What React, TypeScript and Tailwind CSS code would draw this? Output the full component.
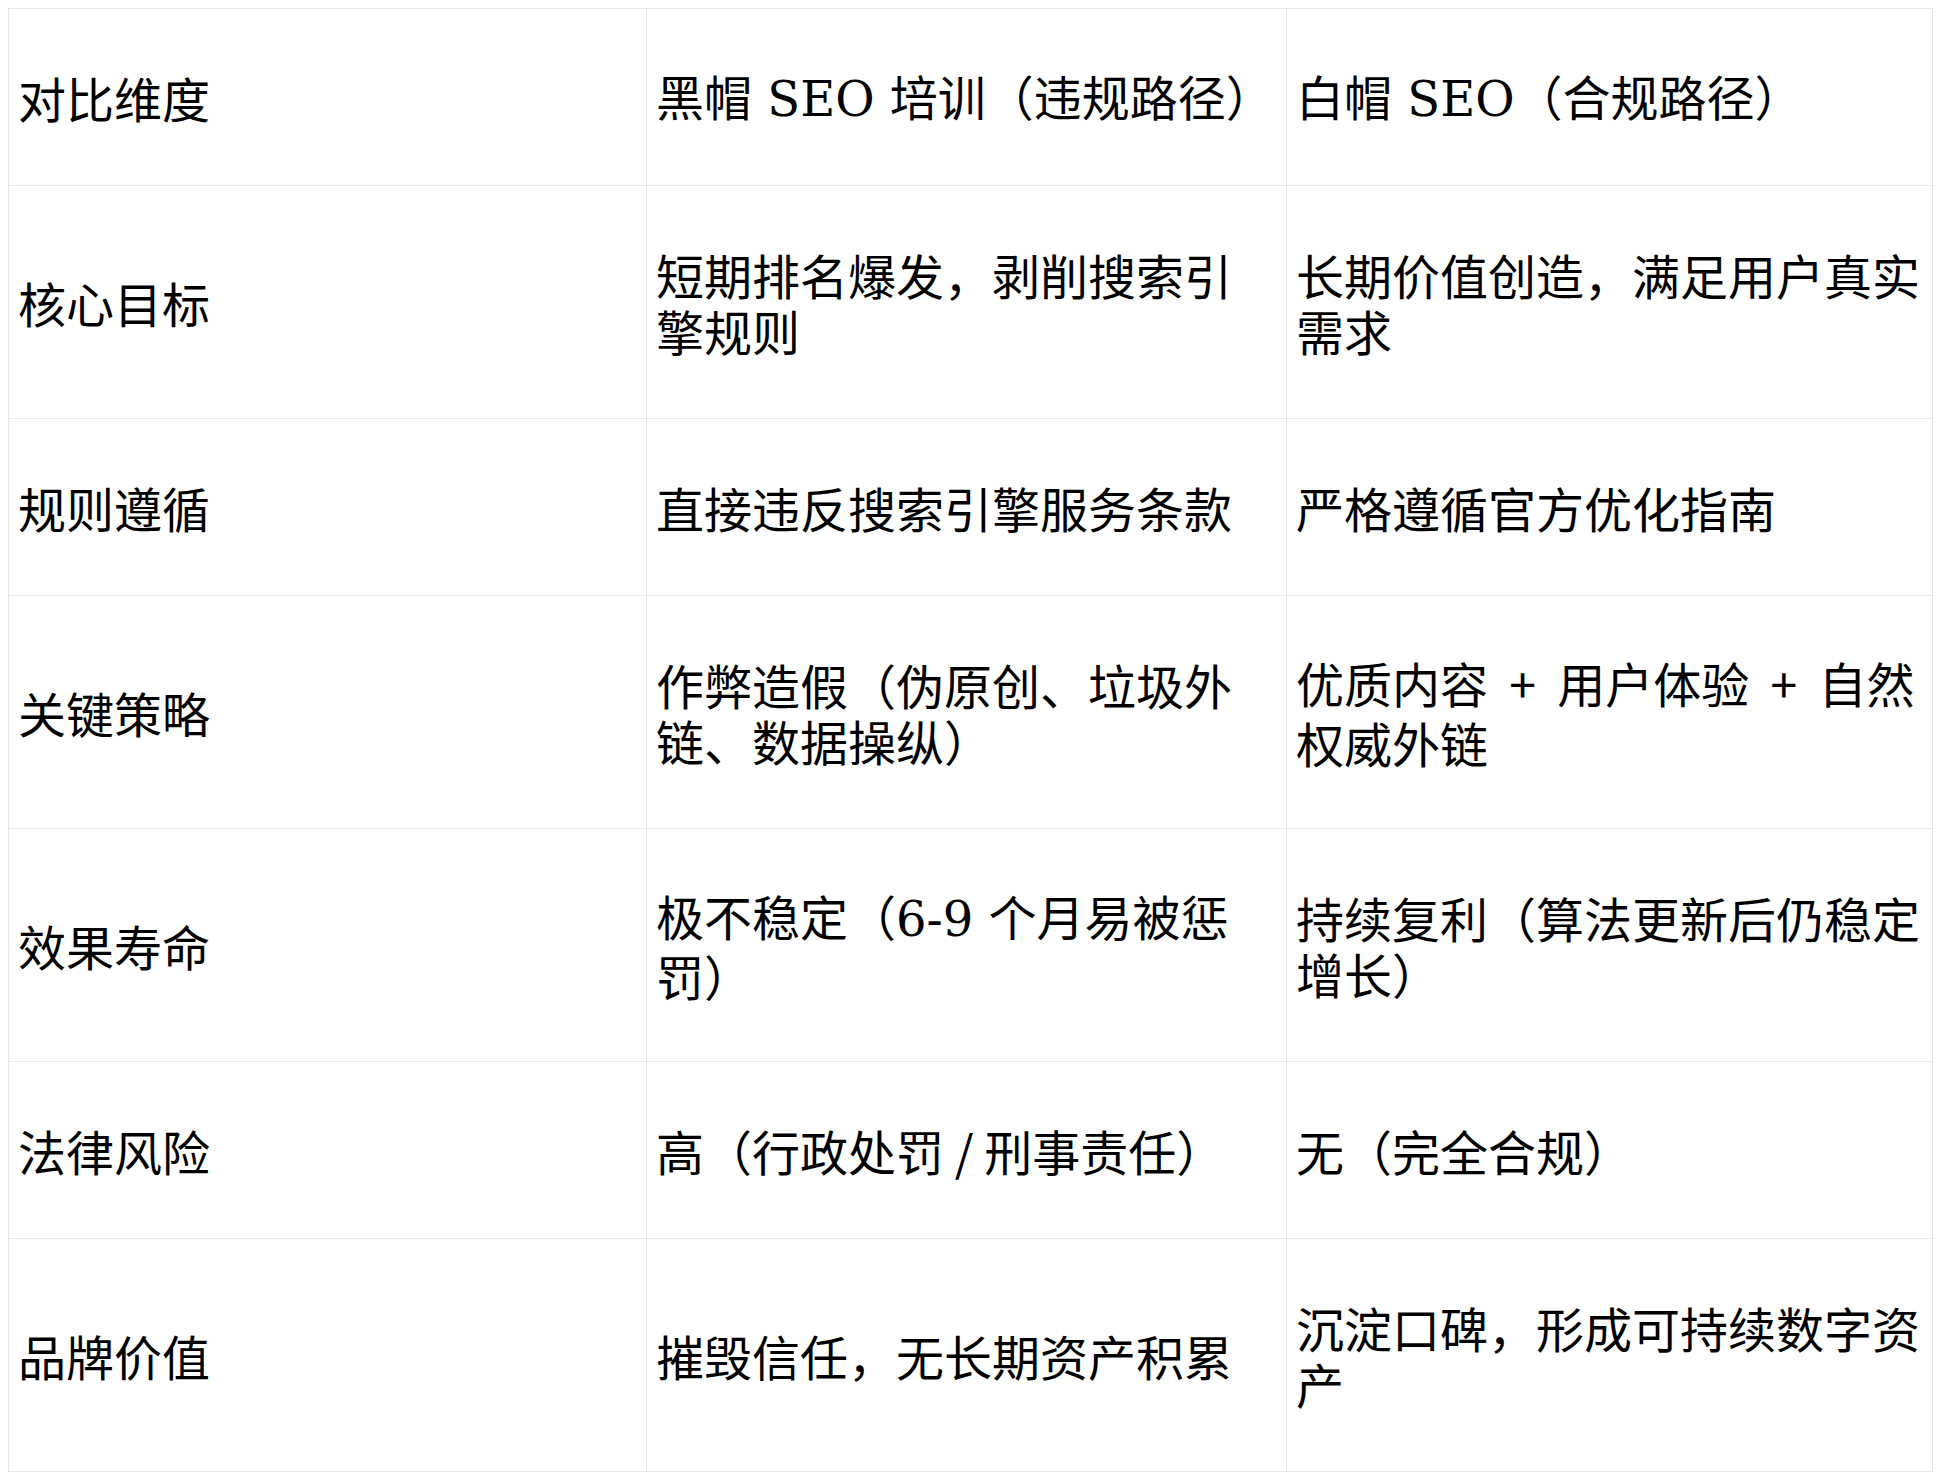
import type { ReactNode } from 'react';

type Row = {
  label: string;
  black: ReactNode;
  white: ReactNode;
  tall?: boolean;
};

// latin letters and spaces fall back to a serif face in the source
const Serif = ({ children }: { children: ReactNode }) => (
  <span className="font-['DejaVu_Serif',serif]">{children}</span>
);

const Plus = () => (
  <>
    <Serif> </Serif>
    <span className="mx-[6px]">+</span>
    <Serif> </Serif>
  </>
);

const rows: Row[] = [
  {
    label: '对比维度',
    black: (
      <>
        黑帽<Serif> SEO </Serif>培训（违规路径）
      </>
    ),
    white: (
      <>
        白帽<Serif> SEO</Serif>（合规路径）
      </>
    ),
  },
  {
    label: '核心目标',
    black: '短期排名爆发，剥削搜索引擎规则',
    white: '长期价值创造，满足用户真实需求',
    tall: true,
  },
  {
    label: '规则遵循',
    black: '直接违反搜索引擎服务条款',
    white: '严格遵循官方优化指南',
  },
  {
    label: '关键策略',
    black: '作弊造假（伪原创、垃圾外链、数据操纵）',
    white: (
      <>
        优质内容<Plus />用户体验<Plus />自然权威外链
      </>
    ),
    tall: true,
  },
  {
    label: '效果寿命',
    black: (
      <>
        极不稳定（<Serif>6-9 </Serif>个月易被惩罚）
      </>
    ),
    white: '持续复利（算法更新后仍稳定增长）',
    tall: true,
  },
  {
    label: '法律风险',
    black: '高（行政处罚 / 刑事责任）',
    white: '无（完全合规）',
  },
  {
    label: '品牌价值',
    black: '摧毁信任，无长期资产积累',
    white: '沉淀口碑，形成可持续数字资产',
    tall: true,
  },
];

export default function App() {
  return (
    <div className="min-h-screen bg-white p-2 text-black">
      <table className="w-[1924px] table-fixed border-collapse font-['Noto_Sans_CJK_SC',sans-serif] text-[48px] leading-[56px]">
        <colgroup>
          <col className="w-[638px]" />
          <col className="w-[640px]" />
          <col className="w-[646px]" />
        </colgroup>
        <tbody>
          {rows.map((row) => {
            const h = row.tall ? 'h-[233px]' : 'h-[177px]';
            return (
              <tr key={row.label}>
                <td className={`${h} border border-[#e5e7eb] pl-[9px] pr-2 align-middle`}>
                  {row.label}
                </td>
                <td className={`${h} border border-[#e5e7eb] pl-[9px] pr-[2px] align-middle`}>
                  <div className="w-[618px]">{row.black}</div>
                </td>
                <td className={`${h} border border-[#e5e7eb] pl-[9px] pr-2 align-middle`}>
                  <div className="w-[625px]">{row.white}</div>
                </td>
              </tr>
            );
          })}
        </tbody>
      </table>
    </div>
  );
}
